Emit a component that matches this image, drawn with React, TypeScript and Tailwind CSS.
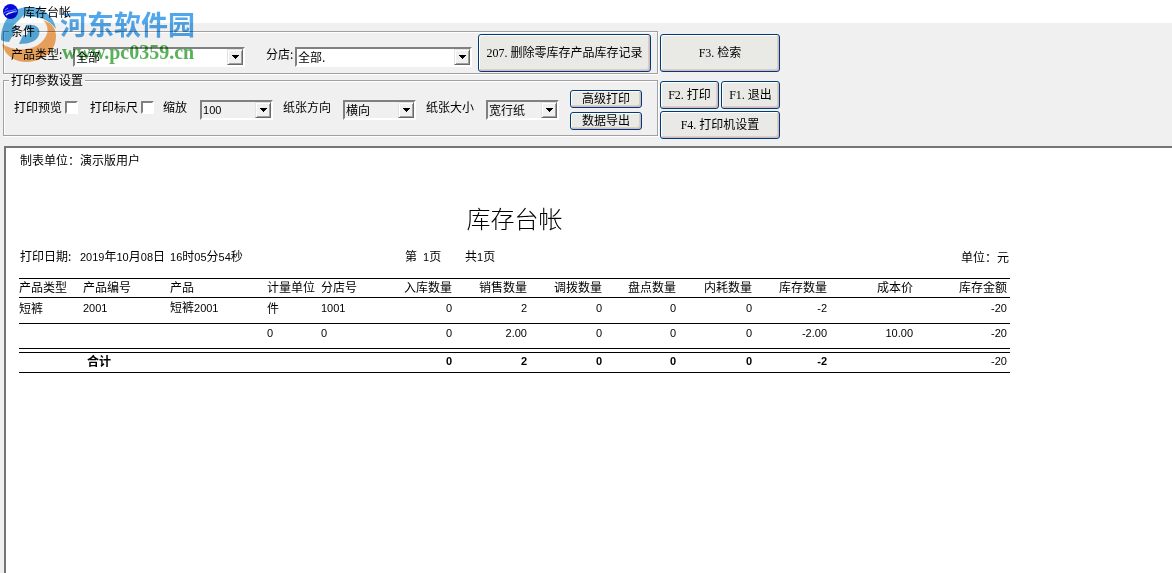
import React, { useId } from 'react';

const LATIN = /([\x21-\x7e]+)/;

/* Mixed text: latin runs are set a step smaller than the Chinese around them. */
function Mixed({ children }: { children: string }) {
  return (
    <>
      {children.split(LATIN).map((part, i) =>
        LATIN.test(part) ? (
          <span key={i} className="font-['Liberation_Sans',sans-serif] text-[11px]">
            {part}
          </span>
        ) : (
          part
        ),
      )}
    </>
  );
}

function Group({ title, children }: { title: string; children: React.ReactNode }) {
  return (
    <fieldset className="min-w-0 border border-[#a0a0a0] shadow-[1px_1px_0_#fff,inset_1px_1px_0_#fff]">
      <legend className="ml-[5px] bg-[#f0f0f0] px-0.5 leading-[12px]">{title}</legend>
      {children}
    </fieldset>
  );
}

function Combo({ id, value, options, className }: {
  id: string;
  value: string;
  options: string[];
  className: string;
}) {
  return (
    <span className={`relative inline-block ${className}`}>
      <select
        id={id}
        defaultValue={value}
        className="block h-[20px] w-full appearance-none border-2 border-t-[#808080] border-r-[#fff] border-b-[#fff] border-l-[#808080] bg-inherit pl-px leading-[16px] outline-none"
      >
        {options.map((o) => (
          <option key={o}>{o}</option>
        ))}
      </select>
      <span className="pointer-events-none absolute top-0.5 right-0.5 flex h-4 w-4 items-center justify-center border border-t-[#e3e3e3] border-r-[#696969] border-b-[#696969] border-l-[#e3e3e3] bg-[#f0f0f0] shadow-[inset_1px_1px_0_#fff,inset_-1px_-1px_0_#a0a0a0]">
        <svg width="7" height="4" viewBox="0 0 7 4" shapeRendering="crispEdges" aria-hidden="true">
          <path d="M0 0H7V1H6V2H5V3H4V4H3V3H2V2H1V1H0Z" />
        </svg>
      </span>
    </span>
  );
}

function Check({ label }: { label: string }) {
  const id = useId();
  return (
    <span className="flex items-center gap-[3px] pb-1.5">
      <label htmlFor={id}>{label}</label>
      <input
        id={id}
        type="checkbox"
        className="h-[13px] w-[13px] appearance-none border-2 border-t-[#808080] border-r-[#fff] border-b-[#fff] border-l-[#808080] bg-white checked:bg-[#003c74]"
      />
    </span>
  );
}

function XpButton({ children, className }: { children: string; className: string }) {
  return (
    <button
      type="button"
      className={`flex items-center justify-center whitespace-pre rounded-[3px] border border-[#003c74] bg-[#e9e9e6] font-['Liberation_Serif','Noto_Sans_CJK_SC',serif] leading-[14px] shadow-[inset_1px_1px_0_#fff,inset_-1px_-1px_0_#d3b5d0,inset_-2px_-2px_0_#d8d2bd] ${className}`}
    >
      {children}
    </button>
  );
}

const columns = [
  { name: '产品类型', width: 'w-[64px]' },
  { name: '产品编号', width: 'w-[87px]' },
  { name: '产品', width: 'w-[97px]' },
  { name: '计量单位', width: 'w-[54px]' },
  { name: '分店号', width: 'w-[64px]' },
  { name: '入库数量', width: 'w-[70px]' },
  { name: '销售数量', width: 'w-[75px]' },
  { name: '调拨数量', width: 'w-[75px]' },
  { name: '盘点数量', width: 'w-[74px]' },
  { name: '内耗数量', width: 'w-[76px]' },
  { name: '库存数量', width: 'w-[75px]' },
  { name: '成本价', width: 'w-[86px]' },
  { name: '库存金额', width: 'w-[94px]' },
];

const detail = ['短裤', '2001', '短裤2001', '件', '1001', '0', '2', '0', '0', '0', '-2', '', '-20'];
const subtotal = ['', '', '', '0', '0', '0', '2.00', '0', '0', '0', '-2.00', '10.00', '-20'];
const total = ['', '合计', '', '', '', '0', '2', '0', '0', '0', '-2', '', '-20'];

const align = (i: number) => (i < 5 ? 'text-left' : 'pr-[3px] text-right');

function Report() {
  return (
    <table className="w-full table-fixed border-separate border-spacing-0 whitespace-nowrap leading-[14px]">
      <colgroup>
        {columns.map((c) => (
          <col key={c.name} className={c.width} />
        ))}
      </colgroup>
      <thead>
        <tr className="h-[20px]">
          {columns.map((c, i) => (
            <th key={c.name} scope="col" className={`border-y border-black p-0 pb-0.5 font-normal ${align(i)}`}>
              {c.name}
            </th>
          ))}
        </tr>
      </thead>
      <tbody>
        <tr className="h-[26px]">
          {detail.map((v, i) => (
            <td key={i} className={`border-b border-black p-0 pb-1.5 ${align(i)}`}>
              <Mixed>{v}</Mixed>
            </td>
          ))}
        </tr>
        <tr className="h-[29px]">
          {subtotal.map((v, i) => (
            <td
              key={i}
              className={`border-b border-black p-0 pb-[11px] shadow-[inset_0_-3px_0_#fff,inset_0_-4px_0_#000] ${align(i)}`}
            >
              <Mixed>{v}</Mixed>
            </td>
          ))}
        </tr>
      </tbody>
      <tfoot>
        <tr className="h-[20px]">
          {total.map((v, i) => (
            <td
              key={i}
              className={`border-b border-black p-0 pb-1 ${align(i)} ${i < 12 ? 'font-bold' : ''} ${i === 1 ? 'pl-1' : ''}`}
            >
              <Mixed>{v}</Mixed>
            </td>
          ))}
        </tr>
      </tfoot>
    </table>
  );
}

function Watermark() {
  return (
    <div className="pointer-events-none absolute top-0 left-0 flex items-start opacity-85 mix-blend-multiply">
      <svg width="60" height="64" viewBox="0 0 60 64" aria-hidden="true">
        <circle cx="28" cy="34" r="26" fill="#fff" />
        <path d="M1 40C1 20 13 7 29 7C44 7 54 17 56 29C51 22 44 18 35 17H28L24 15L13 26H18L9 42C6 42 3 41 1 40Z" fill="#3d9fd6" />
        <path d="M27 25C37 24 41 29 39 35C37 41 30 44 19 44L23 35H27L29 29H25Z" fill="#3d9fd6" />
        <path d="M43 20C51 22 56 28 56 36C56 51 44 61 27 62C15 62 5 56 2 44C13 51 28 51 38 45C48 38 51 28 43 20Z" fill="#f39a45" />
      </svg>
      <div className="pt-2">
        <div className="font-['Noto_Sans_CJK_SC',sans-serif] text-[27px] leading-[31px] font-bold text-[#3398e8]">河东软件园</div>
        <div className="pl-0.5 font-['Liberation_Serif',serif] text-[20px] leading-[26px] font-bold text-[#3ba33b]">www.pc0359.cn</div>
      </div>
    </div>
  );
}

export default function App() {
  return (
    <div className="relative flex min-h-screen flex-col bg-[#f0f0f0] font-['Noto_Sans_CJK_SC',sans-serif] text-[12px] leading-[14px] text-black">
      <header className="flex h-[23px] items-center gap-[5px] bg-white pl-[3px]">
        <svg width="15" height="15" viewBox="0 0 15 15" aria-hidden="true">
          <circle cx="7.5" cy="7.5" r="7.5" fill="#0808e0" />
          <path d="M1 9C4 6 7 8 13 5M2 6L5 4" fill="none" stroke="#6f86f5" strokeWidth="1" />
          <path d="M3 11C6 8 9 9 14 7" fill="none" stroke="#dbe3ff" strokeWidth="1.4" />
        </svg>
        <h1>库存台帐</h1>
      </header>

      <div className="flex items-start gap-0.5 pl-[3px]">
        <div className="flex flex-col pt-0.5">
          <Group title="条件">
            <div className="-mt-[3px] flex items-center pr-[6px] pb-px pl-[7px]">
              <label htmlFor="kind" className="w-[62px] pt-0.5">产品类型:</label>
              <Combo id="kind" value="全部" options={['全部']} className="mt-2 w-[172px] bg-white" />
              <label htmlFor="shop" className="ml-[21px] w-[29px] pt-0.5">分店:</label>
              <Combo id="shop" value="全部." options={['全部.']} className="mt-2 w-[177px] bg-white" />
              <XpButton className="ml-1.5 h-[38px] w-[173px]">207. 删除零库存产品库存记录</XpButton>
            </div>
          </Group>
          <Group title="打印参数设置">
            <div className="flex items-center pt-1 pb-[5px] pl-[10px]">
              <Check label="打印预览" />
              <span className="w-[12px]" />
              <Check label="打印标尺" />
              <label htmlFor="zoom" className="ml-[9px] w-[37px] pb-1.5">缩放</label>
              <Combo id="zoom" value="100" options={['100']} className="w-[73px] bg-[#f0f0f0] font-['Liberation_Sans',sans-serif] text-[11px]" />
              <label htmlFor="direction" className="ml-[10px] w-[60px] pb-1.5">纸张方向</label>
              <Combo id="direction" value="横向" options={['横向', '纵向']} className="w-[73px] bg-[#f0f0f0]" />
              <label htmlFor="paper" className="ml-[10px] w-[60px] pb-1.5">纸张大小</label>
              <Combo id="paper" value="宽行纸" options={['宽行纸']} className="w-[73px] bg-[#f0f0f0]" />
              <div className="ml-[11px] flex flex-col gap-1">
                <XpButton className="h-[18px] w-[72px]">高级打印</XpButton>
                <XpButton className="h-[18px] w-[72px]">数据导出</XpButton>
              </div>
            </div>
          </Group>
        </div>
        <div className="grid w-[120px] grid-cols-2 gap-x-0.5 pt-[11px]">
          <XpButton className="col-span-2 h-[38px]">F3. 检索</XpButton>
          <XpButton className="mt-[9px] h-[28px]">F2. 打印</XpButton>
          <XpButton className="mt-[9px] h-[28px]">F1. 退出</XpButton>
          <XpButton className="col-span-2 mt-0.5 h-[28px]">F4. 打印机设置</XpButton>
        </div>
      </div>

      <main className="mt-[7px] ml-1 grow border-t-2 border-l-2 border-[#757575] bg-white pt-1 pl-[13px]">
        <div className="max-w-[991px]">
          <p className="pl-px leading-[16px]">制表单位：演示版用户</p>
          <h2 className="mt-[34px] text-center text-[24px] leading-[32px] font-light">库存台帐</h2>
          <div className="mt-[14px] grid grid-cols-[385px_60px_1fr_auto] items-center pr-px pl-px leading-[16px]">
            <span className="flex">
              <span className="w-[60px]">打印日期:</span>
              <span><Mixed>2019年10月08日</Mixed></span>
              <span className="ml-[5px]"><Mixed>16时05分54秒</Mixed></span>
            </span>
            <span className="flex gap-1.5">
              <span>第</span>
              <span><Mixed>1页</Mixed></span>
            </span>
            <span><Mixed>共1页</Mixed></span>
            <span>单位：元</span>
          </div>
          <div className="mt-[13px]">
            <Report />
          </div>
        </div>
      </main>
      <Watermark />
    </div>
  );
}
